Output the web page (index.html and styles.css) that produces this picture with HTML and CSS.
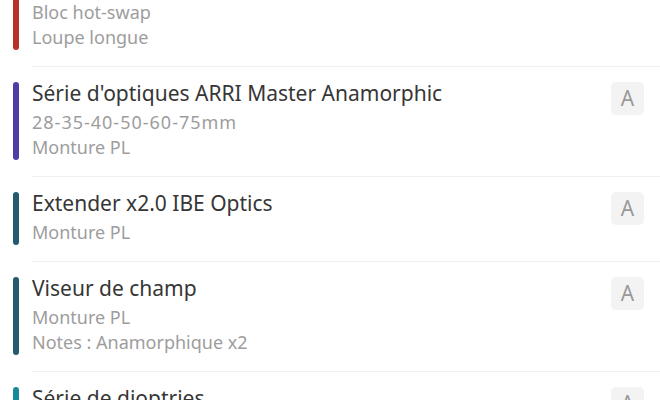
FILE: index.html
```html
<!DOCTYPE html>
<html lang="fr">
<head>
<meta charset="utf-8">
<link rel="stylesheet" href="styles.css">
</head>
<body>
<div class="list">
  <div class="item">
    <span class="bar red"></span>
    <div class="content">
      <div class="title">Sony Venice 2</div>
      <div class="sub">Bloc hot-swap</div>
      <div class="sub">Loupe longue</div>
    </div>
  </div>
  <div class="item">
    <span class="bar purple"></span>
    <div class="content">
      <div class="title">Série d'optiques ARRI Master Anamorphic</div>
      <div class="sub num">28-35-40-50-60-75mm</div>
      <div class="sub">Monture PL</div>
    </div>
    <span class="badge">A</span>
  </div>
  <div class="item">
    <span class="bar teal"></span>
    <div class="content">
      <div class="title">Extender x2.0 IBE Optics</div>
      <div class="sub">Monture PL</div>
    </div>
    <span class="badge">A</span>
  </div>
  <div class="item">
    <span class="bar teal"></span>
    <div class="content">
      <div class="title">Viseur de champ</div>
      <div class="sub">Monture PL</div>
      <div class="sub">Notes : Anamorphique x2</div>
    </div>
    <span class="badge">A</span>
  </div>
  <div class="item">
    <span class="bar cyan"></span>
    <div class="content">
      <div class="title">Série de dioptries</div>
      <div class="sub">Monture PL</div>
    </div>
    <span class="badge">A</span>
  </div>
</div>
</body>
</html>
```
FILE: styles.css
```css
html, body {
  margin: 0;
  padding: 0;
  background: #ffffff;
  overflow: hidden;
}
body {
  font-family: "Noto Sans", "Open Sans", sans-serif;
  width: 660px;
  height: 400px;
}
.list {
  display: flex;
  flex-direction: column;
  margin-top: -44px;
}
.item {
  display: flex;
  align-items: stretch;
  padding: 15px 16px 16px 13px;
  border-top: 1px solid transparent;
  position: relative;
}
.item:first-child {
  border-top: none;
  padding-top: 16px;
}
.item + .item::before {
  content: "";
  position: absolute;
  top: -1px;
  left: 32px;
  right: 0;
  height: 1px;
  background: #f0f0f0;
}
.bar {
  width: 6px;
  border-radius: 3px;
  flex: none;
  margin-right: 13px;
}
.red { background: #b8322a; }
.purple { background: #4b3fa6; }
.teal { background: #245a6f; }
.cyan { background: #17899a; }
.content {
  flex: 1;
  min-width: 0;
}
.title {
  font-size: 21px;
  line-height: 22px;
  color: #363636;
  margin-bottom: 6px;
}
.sub {
  font-size: 18px;
  line-height: 25px;
  color: #9d9d9d;
}
.num {
  letter-spacing: 1px;
}
.badge {
  flex: none;
  width: 33px;
  height: 33px;
  border-radius: 5px;
  background: #f3f3f3;
  color: #999999;
  font-size: 21px;
  line-height: 33px;
  text-align: center;
}
```
